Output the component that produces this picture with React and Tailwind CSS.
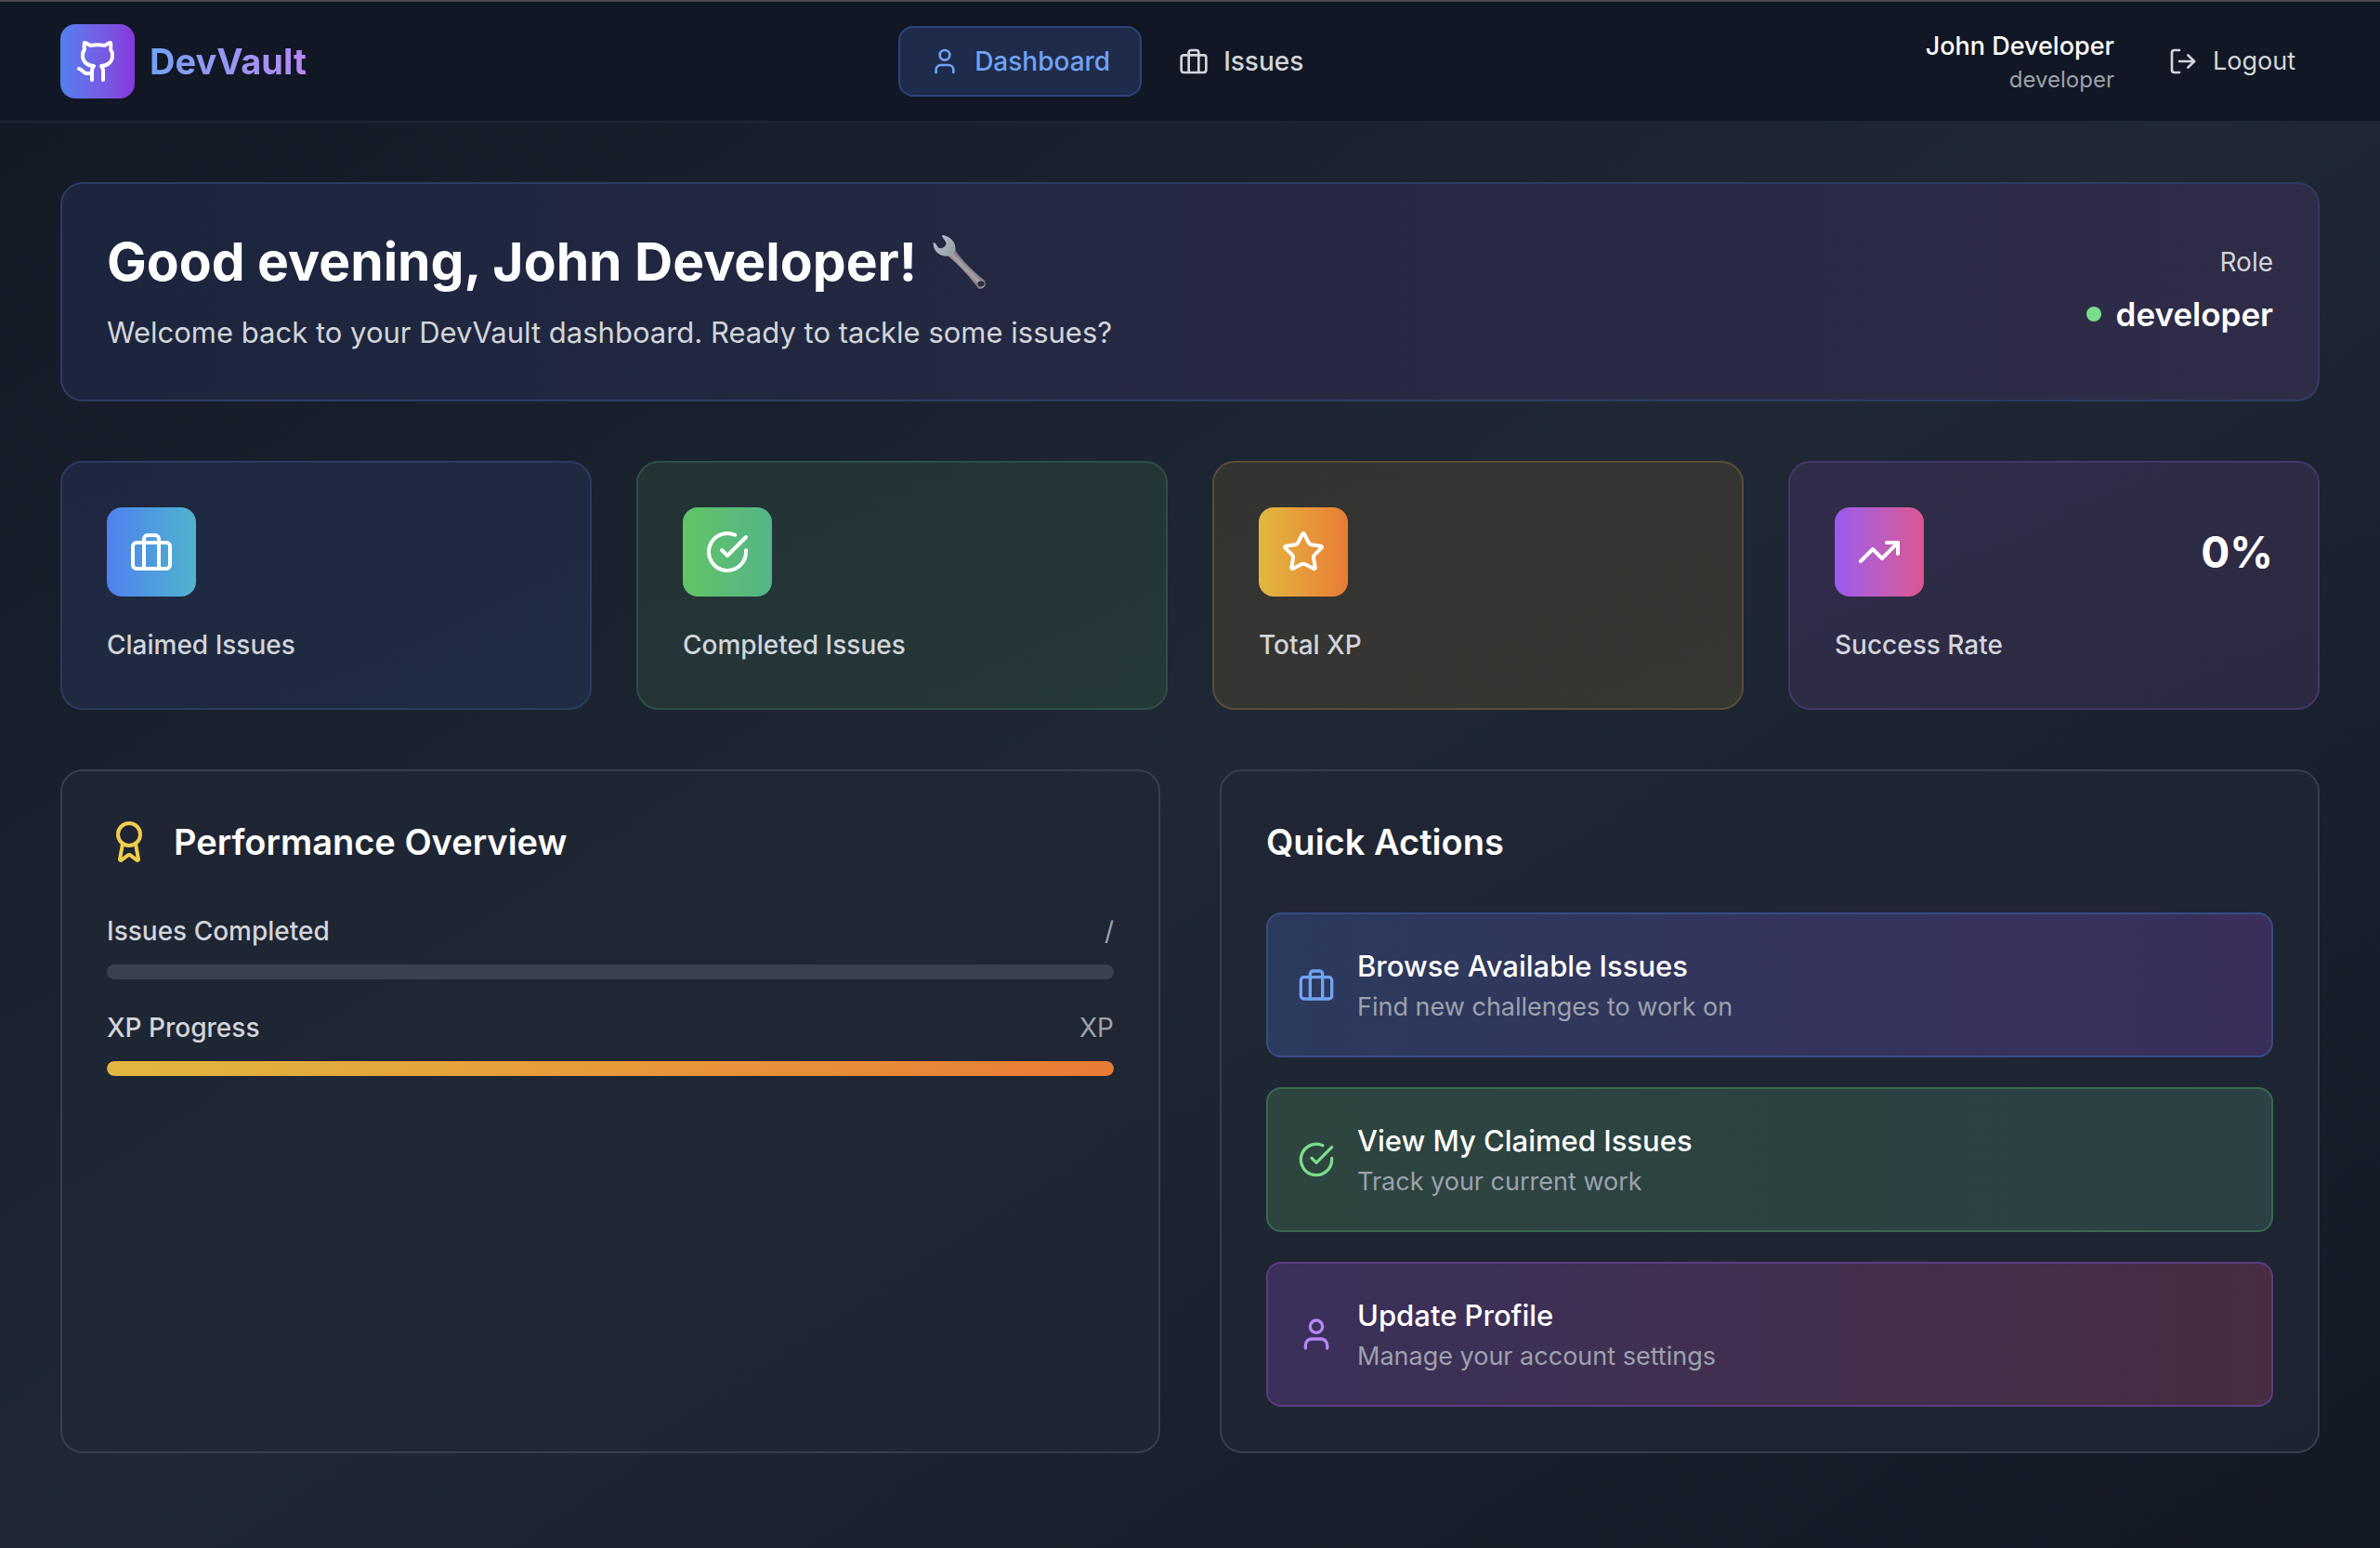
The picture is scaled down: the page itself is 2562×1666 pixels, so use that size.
import { Award, Github, LogOut, Star, TrendingUp, User } from "lucide-react";

function Briefcase({ className }) {
  return (
    <svg className={className} viewBox="0 0 24 24" fill="none" stroke="currentColor" strokeWidth="2" strokeLinecap="round" strokeLinejoin="round" aria-hidden="true">
      <rect x="2" y="7" width="20" height="14" rx="2" />
      <path d="M16 21V5a2 2 0 0 0-2-2h-4a2 2 0 0 0-2 2v16" />
    </svg>
  );
}

function CheckCircle({ className }) {
  return (
    <svg className={className} viewBox="0 0 24 24" fill="none" stroke="currentColor" strokeWidth="2" strokeLinecap="round" strokeLinejoin="round" aria-hidden="true">
      <path d="M22 11.08V12a10 10 0 1 1-5.93-9.14" />
      <path d="m9 11 3 3L22 4" />
    </svg>
  );
}

function Wrench() {
  return (
    <svg className="size-[60px] shrink-0" viewBox="0 0 60 60" role="img" aria-label="wrench">
      <defs>
        <linearGradient id="wrench-handle" x1="33" y1="42" x2="41" y2="34" gradientUnits="userSpaceOnUse">
          <stop offset="0" stopColor="#6c666c" />
          <stop offset="0.5" stopColor="#aaa5aa" />
          <stop offset="1" stopColor="#77747c" />
        </linearGradient>
        <linearGradient id="wrench-head" x1="4" y1="4" x2="22" y2="22" gradientUnits="userSpaceOnUse">
          <stop offset="0" stopColor="#bcc2ca" />
          <stop offset="1" stopColor="#969da8" />
        </linearGradient>
      </defs>
      <path d="M17 23 25 16 C29 24 40 36 56 49 C60 53 57 60 50 58.500 C42 47 30 34 17 23Z" fill="url(#wrench-handle)" />
      <path d="M11.500 1 C19 2 26 8 25.500 16 C24 22 19 24.500 13 23.500 C6 22 2 17 1.500 9.500 C4 8.500 5 12 7 14.500 C10 16.500 14.500 14 15.500 10.500 C16 7 10 4 11.500 1Z" fill="url(#wrench-head)" />
      <ellipse cx="53" cy="53.500" rx="3.600" ry="3" fill="#2b2f45" />
    </svg>
  );
}

const stats = [
  { label: "Claimed Issues", value: "", Icon: Briefcase, card: "from-[#1e273f] to-[#202c42] border-[#2b3b63]", tile: "from-[#4f80ee] to-[#50b3cd]" },
  { label: "Completed Issues", value: "", Icon: CheckCircle, card: "from-[#233235] to-[#25383a] border-[#2f4f45]", tile: "from-[#62c466] to-[#55b486]" },
  { label: "Total XP", value: "", Icon: Star, card: "from-[#333331] to-[#363633] border-[#564f39]", tile: "from-[#e1b740] to-[#e97b35]" },
  { label: "Success Rate", value: "0%", Icon: TrendingUp, card: "from-[#2f2d48] to-[#2c2942] border-[#43376a]", tile: "from-[#9c59ee] to-[#dc5590]" },
];

const actions = [
  { title: "Browse Available Issues", text: "Find new challenges to work on", Icon: Briefcase, box: "from-[#2b3a5d] to-[#3a2f5a] border-[#374c86]", icon: "text-[#70a3f3]" },
  { title: "View My Claimed Issues", text: "Track your current work", Icon: CheckCircle, box: "from-[#2d443f] to-[#2b4144] border-[#39694f]", icon: "text-[#7bdc8b]" },
  { title: "Update Profile", text: "Manage your account settings", Icon: User, box: "from-[#3a305b] to-[#482d42] border-[#5b3d81]", icon: "text-[#b787f5]" },
];

const progress = [
  { label: "Issues Completed", value: "/", percent: 0 },
  { label: "XP Progress", value: "XP", percent: 100 },
];

function Header() {
  return (
    <header className="border-t-2 border-b-2 border-t-[#474747] border-b-[#1f2633] bg-[#111724]">
      <div className="mx-auto flex h-32 max-w-[2560px] items-center justify-between px-16">
        <a href="#home" className="flex items-center gap-4">
          <span className="flex size-20 items-center justify-center rounded-2xl bg-linear-to-r from-[#4f80ee] to-[#8637dc] text-white">
            <Github className="size-12" />
          </span>
          <span className="bg-linear-to-r from-[#70a3f3] to-[#b787f5] bg-clip-text text-[38px] leading-[56px] font-bold text-transparent">DevVault</span>
        </a>
        <nav className="flex items-center gap-2 text-[28px] leading-10 font-medium">
          <a href="#dashboard" aria-current="page" className="flex items-center gap-4 rounded-2xl border-2 border-[#2d437c] bg-[#1e2b4b] px-8 py-4 text-[#70a3f3]">
            <User className="size-8" />
            Dashboard
          </a>
          <a href="#issues" className="flex items-center gap-4 px-8 py-4 text-[#d2d5da]">
            <Briefcase className="size-8" />
            Issues
          </a>
        </nav>
        <div className="flex items-center gap-8">
          <div className="text-right">
            <p className="text-[27px] leading-10 font-medium text-white">John Developer</p>
            <p className="text-2xl leading-8 text-[#9ca2ae]">developer</p>
          </div>
          <button type="button" className="flex items-center gap-4 border-2 border-transparent px-6 py-4 text-[27px] leading-10 text-[#d2d5da]">
            <LogOut className="size-8" />
            Logout
          </button>
        </div>
      </div>
    </header>
  );
}

export default function App() {
  return (
    <div className="min-h-screen bg-linear-to-br from-[#121824] via-[#202835] to-[#121824] font-['Inter',sans-serif] text-white">
      <Header />
      <main className="mx-auto flex max-w-[2560px] flex-col gap-16 px-16 py-16">
        <section className="flex items-center justify-between rounded-3xl border-2 border-[#2f3b66] bg-linear-to-r from-[#1c253d] to-[#2f2c48] p-12">
          <div>
            <h1 className="mb-4 flex items-center gap-4 text-[57px] leading-[72px] font-bold">
              Good evening, John Developer!
              <Wrench />
            </h1>
            <p className="text-[31px] leading-[48px] text-[#d2d5da]">Welcome back to your DevVault dashboard. Ready to tackle some issues?</p>
          </div>
          <div className="flex flex-col items-end gap-2">
            <p className="text-[28px] leading-10 text-[#d2d5da]">Role</p>
            <p className="flex items-center gap-4 text-[35px] leading-[56px] font-semibold">
              <span className="size-4 rounded-full bg-[#7bdc8b]" />
              developer
            </p>
          </div>
        </section>

        <section className="grid grid-cols-4 gap-12">
          {stats.map(({ label, value, Icon, card, tile }) => (
            <article key={label} className={`rounded-3xl border-2 bg-linear-to-br p-12 ${card}`}>
              <div className="mb-8 flex items-center justify-between">
                <span className={`flex size-24 items-center justify-center rounded-2xl bg-linear-to-r ${tile}`}>
                  <Icon className="size-12" />
                </span>
                <span className="text-[46px] leading-[64px] font-bold">{value}</span>
              </div>
              <h2 className="text-[28px] leading-10 font-medium text-[#d2d5da]">{label}</h2>
            </article>
          ))}
        </section>

        <div className="grid grid-cols-2 gap-16">
          <section className="rounded-3xl border-2 border-[#373e4c] bg-[#212734]/80 p-12">
            <h2 className="mb-12 flex items-center gap-6 text-[38px] leading-[56px] font-semibold">
              <Award className="size-12 text-[#f1cf4d]" />
              Performance Overview
            </h2>
            <div className="flex flex-col gap-8">
              {progress.map(({ label, value, percent }) => (
                <div key={label}>
                  <div className="mb-4 flex justify-between text-[28px] leading-10">
                    <span className="font-medium text-[#d2d5da]">{label}</span>
                    <span className="text-[#9ca2ae]">{value}</span>
                  </div>
                  <div className="h-4 overflow-hidden rounded-full bg-[#3a404e]">
                    <div className="h-full rounded-full bg-linear-to-r from-[#e1b740] to-[#e97b35]" style={{ width: `${percent}%` }} />
                  </div>
                </div>
              ))}
            </div>
          </section>

          <section className="rounded-3xl border-2 border-[#373e4c] bg-[#212734]/80 p-12">
            <h2 className="mb-12 text-[38px] leading-[56px] font-semibold">Quick Actions</h2>
            <div className="flex flex-col gap-8">
              {actions.map(({ title, text, Icon, box, icon }) => (
                <button type="button" key={title} className={`flex items-center gap-6 rounded-2xl border-2 bg-linear-to-r p-8 text-left ${box}`}>
                  <Icon className={`size-10 shrink-0 ${icon}`} />
                  <span className="flex flex-col">
                    <span className="text-[31px] leading-[48px] font-medium">{title}</span>
                    <span className="text-[27px] leading-10 text-[#9ca2ae]">{text}</span>
                  </span>
                </button>
              ))}
            </div>
          </section>
        </div>
      </main>
    </div>
  );
}
